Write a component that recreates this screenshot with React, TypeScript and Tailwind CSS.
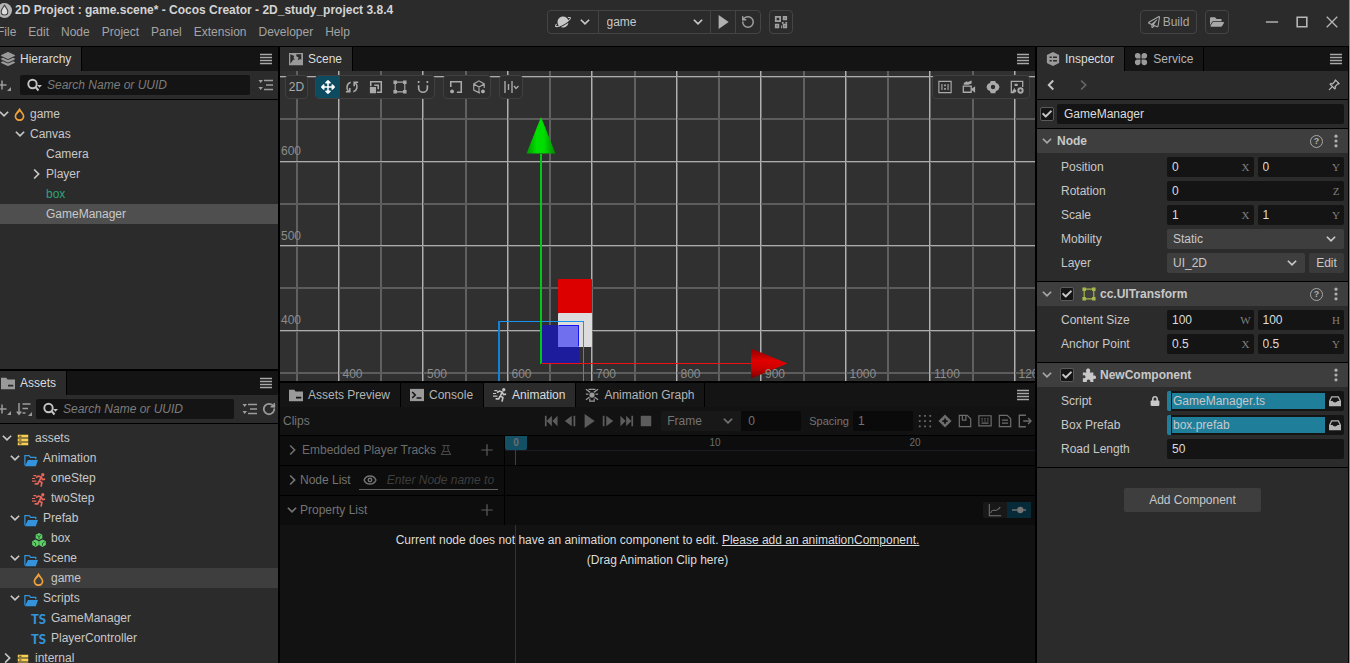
import React from "react";
import { RotateCcw, RotateCw, Eye } from "lucide-react";
import { FaLock, FaRegPaperPlane, FaFolderOpen, FaArrowsAlt, FaLayerGroup, FaCheck } from "react-icons/fa";
import { IoPlanet } from "react-icons/io5";
import { BsPinAngle } from "react-icons/bs";

type IconProps = { className?: string; children: React.ReactNode };

function Ico({ className = "size-4", children }: IconProps) {
  return (
    <svg viewBox="0 0 16 16" className={`shrink-0 ${className}`} fill="none" stroke="currentColor" strokeWidth="1.5" aria-hidden="true">
      {children}
    </svg>
  );
}

const solid = { fill: "currentColor", stroke: "none" } as const;

const Down = ({ className = "size-3" }) => (
  <Ico className={className}><path d="M2.5 5L8 10.5 13.500 5" strokeWidth="2.300" /></Ico>
);
const Right = ({ className = "size-3" }) => (
  <Ico className={className}><path d="M5.500 2L11.500 8l-6 6" strokeWidth="2.300" /></Ico>
);
const Left = ({ className = "size-3" }) => (
  <Ico className={className}><path d="M11 2L5 8l6 6" strokeWidth="2.500" /></Ico>
);

const Drop = () => (
  <svg viewBox="0 0 11 13" className="h-[13px] w-[11px] shrink-0" fill="none" stroke="currentColor" aria-hidden="true">
    <path d="M5.500 1.500C4 4 1.400 5.600 1.400 8.300a4.100 3.900 0 0 0 8.200 0C9.600 5.600 6.900 4 5.500 1.500Z" strokeWidth="1.700" />
    <path d="M5.500 0v3.500L3 6.500Z" fill="currentColor" stroke="none" />
  </svg>
);
const Runner = () => (
  <Ico className="size-3.5">
    <circle cx="12.300" cy="2" r="1.900" {...solid} />
    <path d="M4.500 5.200L7.500 3.500l3 1L8.500 9l2.800 2-1 4.500M8 9.500L6.500 12.500H3M10.500 4.800L12 7.500l3-.5" strokeWidth="1.900" />
    <path d="M1.500 3h3.500M0 6.300h3.500M0 9.300h5" strokeWidth="1.200" />
  </Ico>
);
const Puzzle = () => (
  <Ico className="size-3.5">
    <path d="M1 5h4.300C3.800 2.500 5 .5 7 .5S10.200 2.500 8.800 5H13v3.800c2-1 3 .2 3 1.800s-1 2.700-3 1.700V16H9.300c.8-2-.3-3-1.800-3s-2.600 1-1.800 3H1v-4.500c2.200.8 3-.2 3-1.500S3 7.700 1 8.500z" {...solid} />
  </Ico>
);
const Cubes = () => (
  <Ico className="size-3.5">
    <path d="M8 0l3.800 2v4L8 8 4.200 6V2zM4 7.500l3.800 2v4.300L4 16 .2 13.800V9.500zM12 7.500l3.800 2v4.300L12 16l-3.800-2.200V9.500z" {...solid} />
    <path d="M8 4v3M5.500 2.700L8 4l2.500-1.300M4 11.500v3M1.500 10.200L4 11.500M12 11.500v3M14.500 10.200L12 11.500" stroke="#1f5a2c" strokeWidth="1" />
  </Ico>
);
const PlusCorner = () => (
  <Ico>
    <path d="M1.500 8h9M6 3.500v9" />
    <path d="M15 10v4h-4z" {...solid} />
  </Ico>
);
const SearchIco = () => (
  <Ico>
    <circle cx="6.500" cy="7" r="4.200" strokeWidth="1.900" />
    <path d="M9.500 10l3 3.500" strokeWidth="2" />
    <path d="M11 8h5l-2.500 2.800z" {...solid} />
  </Ico>
);
const ListIco = () => (
  <Ico>
    <path d="M0.500 3h4.500L2.700 6zM0.500 10h4.500L2.700 13z" {...solid} />
    <path d="M6 3.500h9M8 8h7M6 12.500h9" />
  </Ico>
);
const SortIco = () => (
  <Ico>
    <path d="M3 2v11M.8 10.500L3 13.200l2.200-2.700M6.500 3h8M6.500 7.500h5.500M6.500 12h3" />
    <path d="M16 11v4h-4z" {...solid} />
  </Ico>
);
const FolderTab = () => (
  <Ico className="size-3.5">
    <path d="M0 2h6l1.500 2H16v11H0zM8 10v2h6v-2z" fillRule="evenodd" {...solid} />
  </Ico>
);
const FolderBlue = () => (
  <Ico className="size-3.5">
    <path d="M1 14V3h5l1.500 2h6v2" strokeWidth="1.400" />
    <path d="M4.500 8H16l-2.500 7H1z" {...solid} />
  </Ico>
);
const DbIco = () => (
  <Ico className="size-3">
    <path d="M1 1h14v3.800H1zM1 6.100h14v3.800H1zM1 11.200h14V15H1z" {...solid} />
    <path d="M3 3h3M3 8h3M3 13h3" stroke="#2b2b2b" strokeWidth="1.200" />
  </Ico>
);
const SceneTabIco = () => (
  <Ico className="size-3.5">
    <path d="M0 1h16v14H0zM1.500 2.500v11L5 8.500h2l-2-2 1-2zM8 3l1 2.500 2 .5-1 3.500 3-1.500 1 1V2.500H9z" fillRule="evenodd" {...solid} />
  </Ico>
);
const ConsoleIco = () => (
  <Ico className="size-3.5">
    <path d="M0 1h16v14H0z" {...solid} />
    <path d="M2.500 4.500L6 8l-3.500 3.500M7.500 11.500H13" stroke="#141414" strokeWidth="1.800" />
  </Ico>
);
const GraphIco = () => (
  <Ico className="size-3.5">
    <circle cx="8" cy="8" r="3" {...solid} />
    <path d="M1 1.500l5 3.500M15 1.500l-5 3.500M1 7h3M12 7h3M1 13.500l4-3M15 13.500l-4-3M5.500 12v3h5v-3M4 1.500h8" strokeWidth="1.400" />
  </Ico>
);
const InspectorIco = () => (
  <Ico className="size-3.5">
    <path d="M8 0l7 3.500v9L8 16l-7-3.500v-9z" {...solid} />
    <path d="M4 6h2.500M8 6h4.500M4 10h2.500M8 10h4.500" stroke="#2b2b2b" strokeWidth="1.600" />
  </Ico>
);
const ServiceIco = () => (
  <Ico className="size-3.5">
    <path d="M4.200 1a3.200 3.200 0 0 1 3.200 3.200v3.200H4.200a3.200 3.200 0 0 1 0-6.400zM11.800 1a3.200 3.200 0 0 1 0 6.400H8.600V4.200A3.200 3.200 0 0 1 11.800 1zM4.200 8.600h3.200v3.200a3.200 3.200 0 1 1-3.200-3.200zM8.600 8.600h3.200a3.200 3.200 0 1 1-3.200 3.200z" {...solid} />
  </Ico>
);
const InboxIco = () => (
  <Ico className="size-3">
    <path d="M3 1.500h10L16 8v7H0V8z" {...solid} />
    <path d="M4 3.200h8L14 8h-3c-.5 2.600-5.500 2.600-6 0H2z" fill="#161616" stroke="none" />
  </Ico>
);
const RectIco = () => (
  <Ico className="size-3.5">
    <path d="M2.500 2.500h11v11h-11z" strokeWidth="1.300" />
    <path d="M.5.500h4v4h-4zM11.500.500h4v4h-4zM.5 11.500h4v4h-4zM11.500 11.500h4v4h-4z" {...solid} />
  </Ico>
);

function MenuButton({ label }: { label: string }) {
  return (
    <button aria-label={label} className="mr-1.5 ml-auto text-[#a8a8a8]">
      <Ico className="size-3">
        <path d="M0 2h16M0 6h16M0 10h16M0 14h16" strokeWidth="1.700" />
      </Ico>
    </button>
  );
}

function Tab({ icon, label, active, cut, bright }: { icon: React.ReactNode; label: string; active?: boolean; cut?: boolean; bright?: boolean }) {
  return (
    <button
      className={`flex h-full items-center gap-[5px] border-r border-black pr-2.5 ${cut ? "pl-px" : "pl-[9px]"} ${active ? "bg-[#2b2b2b] text-[#dcdcdc]" : "bg-[#151515] text-[#b4b4b4]"}`}
    >
      <span className={bright ? "text-[#c4c4c4]" : "text-[#9a9a9a]"}>{icon}</span>
      {label}
    </button>
  );
}

function TabBar({ menu, children }: { menu: string; children: React.ReactNode }) {
  return (
    <div className="flex h-6 shrink-0 items-center bg-[#141414]">
      {children}
      <MenuButton label={menu} />
    </div>
  );
}

function Search({ label }: { label: string }) {
  return (
    <label className="flex h-5 min-w-0 flex-1 items-center gap-[5px] rounded-xs bg-[#141414] px-1.5 text-[#c4c4c4]">
      <SearchIco />
      <input aria-label={label} placeholder="Search Name or UUID" className="w-full min-w-0 bg-transparent italic outline-none placeholder:text-[#7c7c7c]" />
    </label>
  );
}

type Row = { level: number; label: string; open?: boolean; icon?: React.ReactNode; selected?: string; tone?: string };

const drop = <span className="text-[#f0a23a]"><Drop /></span>;
const db = <span className="text-[#f8cf52]"><DbIco /></span>;
const folder = <span className="text-[#3393dc]"><FolderBlue /></span>;
const run = <span className="text-[#e8665a]"><Runner /></span>;
const ts = <span className="font-[Lato] text-[13px] leading-none font-black text-[#3393dc]">TS</span>;

const nodes: Row[] = [
  { level: 0, label: "game", open: true, icon: <span className="mr-[3px]">{drop}</span> },
  { level: 1, label: "Canvas", open: true },
  { level: 2, label: "Camera" },
  { level: 2, label: "Player", open: false },
  { level: 2, label: "box", tone: "text-[#2ea37a]" },
  { level: 2, label: "GameManager", selected: "bg-[#4f4f4f]" },
];

const assets: Row[] = [
  { level: 0, label: "assets", open: true, icon: db },
  { level: 1, label: "Animation", open: true, icon: folder },
  { level: 2, label: "oneStep", icon: run },
  { level: 2, label: "twoStep", icon: run },
  { level: 1, label: "Prefab", open: true, icon: folder },
  { level: 2, label: "box", icon: <span className="text-[#5fcf68]"><Cubes /></span> },
  { level: 1, label: "Scene", open: true, icon: folder },
  { level: 2, label: "game", icon: drop, selected: "bg-[#3e3e3e]" },
  { level: 1, label: "Scripts", open: true, icon: folder },
  { level: 2, label: "GameManager", icon: ts },
  { level: 2, label: "PlayerController", icon: ts },
  { level: 0, label: "internal", open: false, icon: db },
];

function Tree({ rows, step, kind }: { rows: Row[]; step: number; kind: "nodes" | "assets" }) {
  return (
    <ul className="min-h-0 flex-1 overflow-hidden pt-1">
      {rows.map((r, i) => (
        <li key={i} className={`h-5 ${r.selected ?? ""}`}>
          <div className={`flex h-full items-center ${kind === "nodes" ? "-ml-1 gap-0.5" : ""}`} style={{ paddingLeft: r.level * step }}>
            <span className={`flex shrink-0 justify-center ${kind === "nodes" ? "w-4" : "w-3.5"}`}>
              {r.open === true && <Down />}
              {r.open === false && <Right />}
            </span>
            {kind === "assets" ? (
              <span className="mt-1 mr-1 flex w-[17px] shrink-0 justify-center">{r.icon}</span>
            ) : (
              r.icon
            )}
            <span className={r.tone ?? ""}>{r.label}</span>
          </div>
        </li>
      ))}
    </ul>
  );
}

const xLabels = [400, 500, 600, 700, 800, 900, 1000, 1100, 1200];
const yLabels = [600, 500, 400];

function Viewport() {
  const cols = Array.from({ length: 50 }, (_, i) => i);
  const rows = Array.from({ length: 30 }, (_, i) => i);
  return (
    <svg className="absolute inset-0 size-full bg-[#303030]" role="img" aria-label="Scene view">
      <defs>
        <linearGradient id="green"><stop offset="0" stopColor="#009400" /><stop offset=".35" stopColor="#00e000" /><stop offset=".6" stopColor="#00dc00" /><stop offset="1" stopColor="#008800" /></linearGradient>
        <linearGradient id="red" x1="0" x2="0" y1="0" y2="1"><stop offset="0" stopColor="#8a0000" /><stop offset=".4" stopColor="#e00000" /><stop offset=".65" stopColor="#d00000" /><stop offset="1" stopColor="#780000" /></linearGradient>
      </defs>
      <g shapeRendering="crispEdges">
        {cols.map((i) => <rect key={i} x={Math.round(15.7 + i * 42.25)} y="0" width="2" height="100%" fill={i % 2 ? "#6e6e6e" : "#606060"} />)}
        {rows.map((i) => <rect key={i} x="0" y={Math.round(5 + i * 42.25)} width="100%" height="2" fill={i % 2 ? "#5c5c5c" : "#585858"} />)}
        {cols.filter((i) => i % 2).map((i) => <rect key={i} x={Math.round(15.7 + i * 42.25)} y="0" width="1" height="100%" fill="#b0b0b0" />)}
        {rows.filter((i) => i % 2 === 0).map((i) => <rect key={i} x="0" y={Math.round(5 + i * 42.25)} width="100%" height="1" fill="#acacac" />)}
      </g>
      <g fill="#8c8c8c" fontSize="12">
        {yLabels.map((v, i) => <text key={v} x="1" y={84 + i * 84.5}>{v}</text>)}
      </g>
      <rect x="278" y="208" width="34" height="34" rx="1" fill="#dc0000" />
      <rect x="278" y="242" width="34" height="34" rx="1" fill="#dcdcdc" />
      <g shapeRendering="crispEdges">
        <rect x="261" y="254" width="38" height="38" fill="#1c1c9c" />
        <rect x="278" y="254" width="21" height="22" fill="#7070ee" />
        <rect x="279" y="254" width="20" height="1" fill="#1414f0" />
        <rect x="298" y="254" width="1" height="21" fill="#1414f0" />
        <rect x="218" y="250" width="86" height="1" fill="#1494f0" />
        <rect x="218" y="250" width="2" height="100%" fill="#1482d2" />
        <rect x="303" y="250" width="1" height="100%" fill="#1494f0" />
        <rect x="260" y="83" width="2" height="210" fill="#00c814" />
        <rect x="261" y="292" width="212" height="1" fill="#f00f14" />
      </g>
      <path d="M261 46l14.500 36.500h-29z" fill="url(#green)" />
      <path d="M471 277.500v30l36.500-15z" fill="url(#red)" />
      <g fill="#8c8c8c" fontSize="12">
        {xLabels.map((v, i) => <text key={v} x={62.5 + i * 84.500} y="307">{v}</text>)}
      </g>
    </svg>
  );
}

const toolBox = "flex h-6 items-center overflow-hidden rounded-sm border border-[#404040] bg-[#2d2d2d] text-[#aaaaaa]";
const tool = "flex h-6 w-6 shrink-0 items-center justify-center";

function SceneTools() {
  return (
    <div className="absolute inset-x-[5px] top-1 flex items-center">
      <button className={`${toolBox} mr-[7px] w-[23px] justify-center`}>2D</button>
      <div className={`${toolBox} mr-2`}>
        <button aria-label="Move" className={`${tool} bg-[#0d4b61] text-white`}><FaArrowsAlt className="size-3.5" /></button>
        <button aria-label="Rotate" className={tool}>
          <Ico className="size-3.5"><path d="M6.500 2.500A6 6 0 0 0 4 12.500M1 13.500h4.500V9M9.500 13.500A6 6 0 0 0 12 3.500M15 2.500h-4.500V7" strokeWidth="1.800" /></Ico>
        </button>
        <button aria-label="Scale" className={tool}>
          <Ico className="size-3.5"><path d="M2 7V2h12v12H9M6 6h4.500v4.500" strokeWidth="1.800" /><path d="M1 8h7v7H1z" {...solid} /></Ico>
        </button>
        <button aria-label="Rect" className={tool}><RectIco /></button>
        <button aria-label="Snap" className={`${tool} w-[22px]`}>
          <Ico className="size-3.5"><path d="M3 6v3a5 5 0 0 0 10 0V6M3 1v2.500M13 1v2.500" strokeWidth="1.900" /></Ico>
        </button>
      </div>
      <div className={`${toolBox} mr-2`}>
        <button aria-label="Anchor" className={tool}>
          <Ico className="size-3.5"><path d="M2 8V2h12v12H9" strokeWidth="1.800" /><circle cx="3.500" cy="13" r="2.200" {...solid} /></Ico>
        </button>
        <button aria-label="Pivot" className={`${tool} w-[22px]`}>
          <Ico className="size-3.5"><path d="M9 15l-7-3.500v-7L8 1l6 3.500V9M2 4.500L8 8l6-3.500M8 8v6" strokeWidth="1.300" /><circle cx="12.500" cy="13" r="2.200" {...solid} /></Ico>
        </button>
      </div>
      <button aria-label="Align" className={`${toolBox} w-6 justify-center`}>
        <Ico className="size-4"><path d="M2 2v12M5.500 5v6M9 2v12M11 7l2 2.500L15.500 7" strokeWidth="1.400" /></Ico>
      </button>
      <div className={`${toolBox} ml-auto`}>
        <button aria-label="Reference size" className={tool}>
          <Ico className="size-3.5"><path d="M1 1.500h14v13H1zM4.500 4.500v7M11.500 4.500v7" strokeWidth="1.300" /><path d="M7 5h2v2H7zM7 9h2v2H7z" {...solid} /></Ico>
        </button>
        <button aria-label="Camera" className={tool}>
          <Ico className="size-3.5"><path d="M1.500 7h9v7h-9z" /><path d="M11 10l4-3v7.500l-4-3zM2 3.500l4-2.500v1.500l5-2L11 4 7 5.500H2z" {...solid} /></Ico>
        </button>
        <button aria-label="Settings" className={tool}>
          <Ico className="size-3.5"><path d="M5.500 1l5 0 1 2.500L14 4.500 15.500 8 14 11.500l-2.500 1-1 2.500h-5l-1-2.500-2.500-1L.5 8 2 4.500l2.500-1zM8 5.500a2.500 2.500 0 1 0 0 5 2.500 2.500 0 0 0 0-5z" fillRule="evenodd" {...solid} /></Ico>
        </button>
        <button aria-label="View settings" className={tool}>
          <Ico className="size-3.5"><path d="M5 14.500H1.500V1.500h13V8" /><path d="M2 14l3-5 2 3v2z" {...solid} /><circle cx="12" cy="12" r="2.500" strokeWidth="2.200" /><path d="M6 6h2v-1H6z" /></Ico>
        </button>
      </div>
    </div>
  );
}

function Check({ label }: { label: string }) {
  return (
    <label className="relative flex size-3.5 shrink-0 items-center justify-center rounded-xs border border-[#5a5a5a] bg-[#151515]">
      <input type="checkbox" defaultChecked aria-label={label} className="peer absolute inset-0 appearance-none" />
      <FaCheck className="hidden size-2.5 text-[#c8c8c8] peer-checked:block" />
    </label>
  );
}

function NumField({ label, value, unit }: { label: string; value: string; unit?: string }) {
  return (
    <label className="flex h-5 min-w-0 flex-1 items-center rounded-xs bg-[#141414] pr-1 pl-[5px]">
      <input aria-label={label} defaultValue={value} className="w-full min-w-0 bg-transparent text-[#dcdcdc] outline-none" />
      {unit && <span className="flex w-2 justify-center font-['Liberation_Serif',serif] text-[11px] text-[#808080]">{unit}</span>}
    </label>
  );
}

function SelectBox({ label, options, className = "", chevron = "right-[7px]", inset = "pl-1.5" }: { label: string; options: string[]; className?: string; chevron?: string; inset?: string }) {
  return (
    <div className={`relative ${className}`}>
      <select aria-label={label} className={`size-full appearance-none bg-transparent outline-none ${inset}`}>
        {options.map((o) => <option key={o}>{o}</option>)}
      </select>
      <span className={`pointer-events-none absolute inset-y-0 flex items-center ${chevron}`}><Down /></span>
    </div>
  );
}

function Prop({ label, lock, children }: { label: string; lock?: boolean; children: React.ReactNode }) {
  return (
    <div className="flex h-5 items-center pr-1 pl-6">
      <span className="flex w-[106px] shrink-0 items-center justify-between pr-[7px]">
        {label}
        {lock && <FaLock className="size-2.5" />}
      </span>
      <div className="flex min-w-0 flex-1 gap-1">{children}</div>
    </div>
  );
}

function Section({ title, icon, check, help, children }: { title: string; icon?: React.ReactNode; check?: boolean; help?: boolean; children: React.ReactNode }) {
  return (
    <section className="border-b border-black">
      <h2 className="flex h-6 items-center bg-[#3e3e3e] pr-[5px] pl-1 font-bold">
        <button aria-label={`Toggle ${title}`} className="mr-1 text-[#a8a8a8]"><Down /></button>
        {check && <span className="mr-2 ml-[3px]"><Check label={title} /></span>}
        {icon && <span className="mr-1">{icon}</span>}
        {title}
        <span className="ml-auto flex items-center gap-1.5 text-[#b0b0b0]">
          {help && (
            <button aria-label="Help" className="flex size-[13px] items-center justify-center rounded-full border border-[#a8a8a8] text-[9px]">?</button>
          )}
          <button aria-label="More">
            <Ico className="size-3.5"><circle cx="8" cy="2.500" r="1.800" {...solid} /><circle cx="8" cy="8" r="1.800" {...solid} /><circle cx="8" cy="13.500" r="1.800" {...solid} /></Ico>
          </button>
        </span>
      </h2>
      <div className="flex flex-col gap-1 pt-1 pb-2">{children}</div>
    </section>
  );
}

function AssetField({ value }: { value: string }) {
  return (
    <div className="flex h-5 flex-1 items-center overflow-hidden rounded-xs border-l-4 border-[#1f7f9b] bg-[#141414] pr-[3px]">
      <button className="mr-1 ml-px h-4 min-w-0 flex-1 bg-[#1f7f9b] pl-px text-left leading-4">{value}</button>
      <button aria-label={`Locate ${value}`} className="text-[#b4b4b4]"><InboxIco /></button>
    </div>
  );
}

function Inspector() {
  return (
    <aside className="flex w-[311px] shrink-0 flex-col overflow-hidden">
      <TabBar menu="Inspector menu">
        <Tab icon={<InspectorIco />} label="Inspector" active />
        <Tab icon={<ServiceIco />} label="Service" />
      </TabBar>
      <div className="flex h-[29px] items-center border-b border-black px-2">
        <button aria-label="Back"><Left /></button>
        <button aria-label="Forward" className="ml-5 text-[#666]"><Right /></button>
        <button aria-label="Pin" className="ml-auto"><BsPinAngle className="size-3" strokeWidth={0.6} /></button>
      </div>
      <div className="flex h-[29px] items-center gap-[3px] border-b border-black pr-1 pl-[3px]">
        <Check label="Node active" />
        <input aria-label="Node name" defaultValue="GameManager" className="h-5 min-w-0 flex-1 rounded-xs bg-[#141414] px-[7px] text-[#dcdcdc] outline-none" />
      </div>
      <Section title="Node" help>
        <Prop label="Position"><NumField label="Position X" value="0" unit="X" /><NumField label="Position Y" value="0" unit="Y" /></Prop>
        <Prop label="Rotation"><NumField label="Rotation Z" value="0" unit="Z" /></Prop>
        <Prop label="Scale"><NumField label="Scale X" value="1" unit="X" /><NumField label="Scale Y" value="1" unit="Y" /></Prop>
        <Prop label="Mobility"><SelectBox label="Mobility" options={["Static", "Stationary", "Movable"]} className="h-5 flex-1 rounded-xs bg-[#3e3e3e]" /></Prop>
        <Prop label="Layer">
          <SelectBox label="Layer" options={["UI_2D", "UI_3D", "DEFAULT"]} className="h-5 flex-1 rounded-xs bg-[#3e3e3e]" />
          <button className="h-5 w-[35px] rounded-xs bg-[#3a3a3a]">Edit</button>
        </Prop>
      </Section>
      <Section title="cc.UITransform" icon={<span className="text-[#a9b84a]"><RectIco /></span>} check help>
        <Prop label="Content Size"><NumField label="Width" value="100" unit="W" /><NumField label="Height" value="100" unit="H" /></Prop>
        <Prop label="Anchor Point"><NumField label="Anchor X" value="0.5" unit="X" /><NumField label="Anchor Y" value="0.5" unit="Y" /></Prop>
      </Section>
      <Section title="NewComponent" icon={<Puzzle />} check>
        <Prop label="Script" lock><AssetField value="GameManager.ts" /></Prop>
        <Prop label="Box Prefab"><AssetField value="box.prefab" /></Prop>
        <Prop label="Road Length"><NumField label="Road Length" value="50" /></Prop>
      </Section>
      <button className="mx-auto mt-5 h-6 w-[137px] rounded-xs bg-[#3e3e3e]">Add Component</button>
    </aside>
  );
}

const transport: { label: string; art: React.ReactNode }[] = [
  { label: "First frame", art: <path d="M1 2h2v12H1zM9 2v12L3 8zM15.500 2v12l-6-6z" /> },
  { label: "Previous frame", art: <path d="M10 2v12L2 8zM12 2h2v12h-2z" /> },
  { label: "Play", art: <path d="M3 0l11.500 8L3 16z" /> },
  { label: "Next frame", art: <path d="M6 2v12l8-6zM2 2h2v12H2z" /> },
  { label: "Last frame", art: <path d="M15 2h-2v12h2zM7 2v12l6-6zM.5 2v12l6-6z" /> },
  { label: "Stop", art: <rect x="2" y="2" width="12" height="12" rx="1" /> },
];

const animTools: { label: string; art: React.ReactNode }[] = [
  { label: "Spacing grid", art: <path d="M1 2h2M7 2h2M13 2h2M1 8h2M7 8h2M13 8h2M1 14h2M7 14h2M13 14h2" strokeWidth="2" /> },
  { label: "Add keyframe", art: <path d="M8 .5L15.500 8 8 15.500.5 8zM7 5v2H5v2h2v2h2V9h2V7H9V5z" fillRule="evenodd" {...solid} /> },
  { label: "Save", art: <path d="M1.500 1.500h9l4 4v9h-13zM5 2v5h4V2" strokeWidth="1.400" /> },
  { label: "Shortcuts", art: <path d="M1 2h14v11.500H1zM4 5.500h1.500M7.200 5.500h1.500M10.500 5.500H12M4 8h1.500M7.200 8h1.500M10.500 8H12M4 10.500h8" strokeWidth="1.400" /> },
  { label: "Document", art: <path d="M1.500 1.500h9l4 4v9h-13zM4.500 7h7M4.500 10.500h7" strokeWidth="1.400" /> },
  { label: "Exit", art: <path d="M9 1.500H1.500v13H9M6 8h8M11.500 4.500L15 8l-3.500 3.500" strokeWidth="1.600" /> },
];

const Plus = () => <Ico className="size-3.5"><path d="M8 1.500v13M1.500 8h13" strokeWidth="1.400" /></Ico>;

function AnimationPanel() {
  return (
    <section className="flex min-h-0 flex-[281] flex-col overflow-hidden border-t-2 border-black">
      <TabBar menu="Animation menu">
        <Tab icon={<FolderTab />} label="Assets Preview" />
        <Tab icon={<ConsoleIco />} label="Console" />
        <Tab icon={<Runner />} label="Animation" active bright />
        <Tab icon={<GraphIco />} label="Animation Graph" />
      </TabBar>
      <div className="flex h-[29px] shrink-0 items-center border-b border-black bg-[#121212] pl-[3px] text-[#747474]">
        <span>Clips</span>
        <div className="ml-auto flex">
          {transport.map((t) => (
            <button key={t.label} aria-label={t.label} className="flex w-[19px] justify-center text-[#5c5c5c]">
              <svg viewBox="0 0 16 16" className="size-3.5" fill="currentColor">{t.art}</svg>
            </button>
          ))}
        </div>
        <SelectBox label="Unit" options={["Frame", "Time"]} className="ml-1.5 h-5 w-20 shrink-0 rounded-l-xs bg-[#181818]" />
        <input aria-label="Current frame" defaultValue="0" className="h-5 w-[60px] rounded-r-xs bg-[#0a0a0a] px-[7px] outline-none" />
        <label htmlFor="spacing" className="ml-2 text-[11px]">Spacing</label>
        <input id="spacing" defaultValue="1" className="ml-1 h-5 w-[60px] rounded-xs bg-[#0a0a0a] px-[5px] outline-none" />
        <div className="ml-0.5 flex">
          {animTools.map((t) => (
            <button key={t.label} aria-label={t.label} className="flex w-5 justify-center text-[#6c6c6c]"><Ico className="size-3.5">{t.art}</Ico></button>
          ))}
        </div>
      </div>
      <div className="flex h-[30px] shrink-0 border-b border-black bg-[#0d0d0d] text-[#6c6c6c]">
        <div className="flex w-[225px] shrink-0 items-center border-r border-black pr-2.5 pl-1.5">
          <Right />
          <span className="ml-1">Embedded Player Tracks</span>
          <Ico className="ml-1 size-3 text-[#484848]"><path d="M3 2h10M5.500 2v5L2 14h12l-3.500-7V2M4 10h8" strokeWidth="1.400" /></Ico>
          <button aria-label="Add track" className="ml-auto text-[#5c5c5c]"><Plus /></button>
        </div>
        <div className="relative flex-1">
          <div className="flex h-[15px] items-center border-b border-[#1b1b26] text-[10px]">
            <span className="h-[14px] w-[22px] rounded-b-xs bg-[#145064] text-center leading-[14px] font-bold">0</span>
            <span className="ml-[172px] w-8 text-center">10</span>
            <span className="ml-[168px] w-8 text-center">20</span>
          </div>
          <span className="absolute top-[14px] bottom-0 left-2.5 w-px bg-[#1d4a5c]" />
        </div>
      </div>
      <div className="flex h-[30px] shrink-0 border-b border-black bg-[#0d0d0d] text-[#747474]">
        <div className="flex w-[225px] shrink-0 items-center border-r border-black pr-1.5 pl-1.5">
          <Right />
          <span className="ml-0.5 shrink-0">Node List</span>
          <label className="ml-2 flex h-5 min-w-0 flex-1 items-center gap-2.5 border-b border-[#606060] pl-1">
            <Eye className="size-3.5 shrink-0" strokeWidth={2.500} />
            <input aria-label="Node filter" placeholder="Enter Node name to" className="min-w-0 flex-1 bg-transparent italic outline-none placeholder:text-[#3e3e3e]" />
          </label>
        </div>
      </div>
      <div className="flex h-[29px] shrink-0 bg-[#0d0d0d] text-[#747474]">
        <div className="flex w-[225px] shrink-0 items-center border-r border-black pr-2.5 pl-1.5">
          <Down />
          <span className="ml-0.5">Property List</span>
          <button aria-label="Add property" className="ml-auto text-[#5c5c5c]"><Plus /></button>
        </div>
        <div className="flex flex-1 items-center justify-end pr-1">
          <button aria-label="Curves" className="flex h-4 w-6 items-center justify-center rounded-l-xs bg-[#181818]">
            <Ico className="size-3.5"><path d="M1.500 1v13.500H15M3 11.500c3-8 5 2 11-7" strokeWidth="1.200" /></Ico>
          </button>
          <button aria-label="Keyframes" className="flex h-4 w-6 items-center justify-center bg-[#072a38]">
            <Ico className="size-3.5"><path d="M0 8h16" strokeWidth="1.600" /><circle cx="9.500" cy="8" r="3.600" {...solid} /></Ico>
          </button>
        </div>
      </div>
      <div className="relative min-h-0 flex-1 bg-[#121212] pt-[5px] text-center leading-5 text-[#dcdcdc]">
        <span className="absolute inset-y-0 left-[235px] w-px bg-[#1d3a46]" />
        <p className="relative">Current node does not have an animation component to edit. <a href="#" className="underline">Please add an animationComponent.</a></p>
        <p className="relative">(Drag Animation Clip here)</p>
      </div>
    </section>
  );
}

function Header() {
  const box = "flex h-6 items-center rounded-sm border border-[#444444]";
  return (
    <header className="grid h-[47px] shrink-0 grid-cols-[1fr_auto_1fr] border-b border-black bg-[#2b2b2b] pr-2.5">
      <div className="-ml-[3px] whitespace-nowrap">
        <h1 className="flex h-5 items-center gap-[3px] font-bold text-[#d4d4d4]">
          <svg viewBox="0 0 16 16" className="size-[15px]" aria-hidden="true">
            <circle cx="8" cy="8" r="8" fill="#b4b4b4" />
            <path d="M8 2.500c-1.500 2.600-3.500 4-3.500 6.800a3.500 3.500 0 0 0 7 0c0-2.800-2-4.200-3.500-6.800z" fill="#dedede" stroke="#444" strokeWidth="1.200" />
          </svg>
          2D Project : game.scene* - Cocos Creator - 2D_study_project 3.8.4
        </h1>
        <nav className="flex h-6 items-center gap-3 text-[#a4a4a4]">
          {["File", "Edit", "Node", "Project", "Panel", "Extension", "Developer", "Help"].map((m) => <button key={m}>{m}</button>)}
        </nav>
      </div>
      <div className="flex gap-2 pt-2.5">
        <div className={`${box} divide-x divide-[#444444] *:h-full`}>
          <button aria-label="Preview platform" className="flex w-[51px] items-center justify-center gap-2"><IoPlanet className="size-4 -scale-x-100" /><Down /></button>
          <SelectBox label="Preview scene" options={["game"]} className="w-[112px]" chevron="right-1.5" inset="pl-2" />
          <button aria-label="Play" className="flex w-[25px] items-center justify-center text-[#b0b0b0]"><svg viewBox="0 0 16 16" className="size-3.5" fill="currentColor"><path d="M3 0l11.500 8L3 16z" /></svg></button>
          <button aria-label="Refresh" className="flex w-6 items-center justify-center text-[#a0a0a0]"><RotateCcw className="size-3.5" strokeWidth={2.500} /></button>
        </div>
        <button aria-label="QR code" className={`${box} w-6 justify-center text-[#a0a0a0]`}>
          <Ico className="size-3.5"><path d="M2 2h5v5H2zM11 2h3v3h-3zM2 11h3v3H2zM11 11h3v3h-3z" strokeWidth="2" /><path d="M9 8h2v2H9zM13 8h2v2h-2zM8 12h1v3H8z" {...solid} /></Ico>
        </button>
      </div>
      <div className="flex items-start justify-end pt-2.5 text-[#a8a8a8]">
        <button className={`${box} mr-2 w-[57px] justify-center gap-[3px]`}><FaRegPaperPlane className="size-3" />Build</button>
        <button aria-label="Open project folder" className={`${box} mr-9 w-6 justify-center`}><FaFolderOpen className="size-3.5" /></button>
        <div className="flex h-6 items-center gap-4 text-[#b8b8b8]">
          <button aria-label="Minimize"><Ico className="size-3.5"><path d="M1 8h14" strokeWidth="1.600" /></Ico></button>
          <button aria-label="Maximize"><Ico className="size-3.5"><path d="M2.500 2.500h11v11h-11z" strokeWidth="1.800" /></Ico></button>
          <button aria-label="Close"><Ico className="size-3.5"><path d="M2 2l12 12M14 2L2 14" strokeWidth="1.500" /></Ico></button>
        </div>
      </div>
    </header>
  );
}

export default function App() {
  return (
    <div className="flex h-screen flex-col overflow-hidden border-r border-[#85878a] bg-[#2b2b2b] font-['Liberation_Sans',Arial,sans-serif] text-xs text-[#c8c8c8]">
      <Header />
      <main className="flex min-h-0 flex-1 border-r border-black">
        <div className="flex w-[280px] shrink-0 flex-col border-r-2 border-black">
          <section className="flex min-h-0 flex-[323] flex-col overflow-hidden">
            <TabBar menu="Hierarchy menu"><Tab icon={<FaLayerGroup className="size-3.5" />} label="Hierarchy" active cut /></TabBar>
            <div className="-ml-1 flex h-[29px] shrink-0 items-center border-b border-black pr-1 text-[#9c9c9c]">
              <button aria-label="Create node" className="mr-2"><PlusCorner /></button>
              <Search label="Search nodes" />
              <button aria-label="Expand all" className="ml-2"><ListIco /></button>
            </div>
            <Tree rows={nodes} step={16} kind="nodes" />
          </section>
          <section className="flex min-h-0 flex-[293] flex-col overflow-hidden border-t-2 border-black">
            <TabBar menu="Assets menu"><Tab icon={<FolderTab />} label="Assets" active cut /></TabBar>
            <div className="-ml-1 flex h-[29px] shrink-0 items-center border-b border-black pr-0.5 text-[#9c9c9c]">
              <button aria-label="Create asset" className="mr-1"><PlusCorner /></button>
              <button aria-label="Sort" className="mr-1"><SortIco /></button>
              <Search label="Search assets" />
              <button aria-label="Collapse all" className="ml-2"><ListIco /></button>
              <button aria-label="Refresh assets" className="ml-1"><RotateCw className="size-3.5" strokeWidth={3} /></button>
            </div>
            <Tree rows={assets} step={8} kind="assets" />
          </section>
        </div>
        <div className="flex min-w-0 flex-1 flex-col border-r-2 border-black">
          <section className="flex min-h-0 flex-[335] flex-col">
            <TabBar menu="Scene menu"><Tab icon={<SceneTabIco />} label="Scene" active /></TabBar>
            <div className="relative min-h-0 flex-1 overflow-hidden">
              <Viewport />
              <SceneTools />
            </div>
          </section>
          <AnimationPanel />
        </div>
        <Inspector />
      </main>
    </div>
  );
}
